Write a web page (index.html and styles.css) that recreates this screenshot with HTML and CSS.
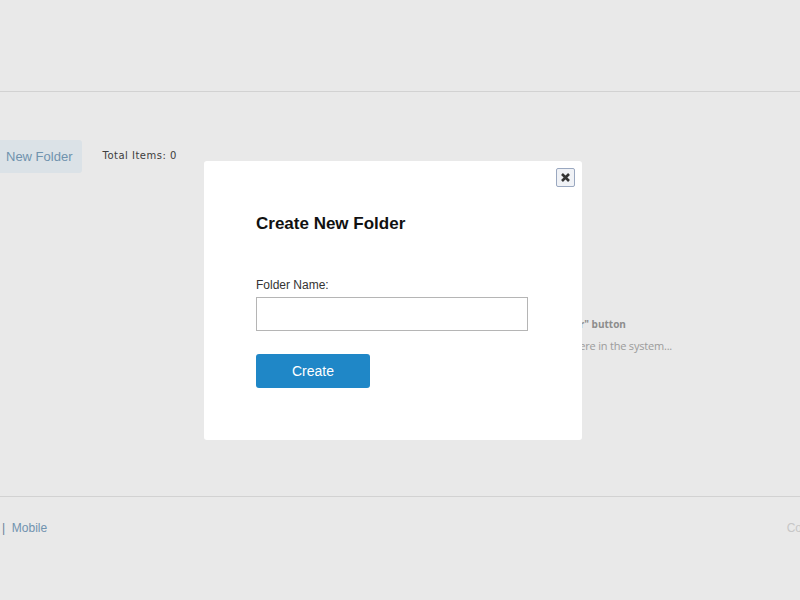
FILE: index.html
```html
<!DOCTYPE html>
<html>
<head>
    <title>Files</title>
    <link rel="stylesheet" href="styles.css">
</head>
<body>

    <!-- Header -->
    <div class="header"></div>

    <!-- Toolbar -->
    <div class="main">
        <div class="toolbar">
            <a class="new-btn" href="#">New Folder</a>
            <span class="total">Total Items: 0</span>
        </div>
        <div class="empty">
            <p class="empty-title">Click the "New Folder" button</p>
            <p class="empty-text">There are no items here in the system...</p>
        </div>
    </div>

    <!-- Footer -->
    <div class="footer">
        <span class="links">| &nbsp;<a href="#">Mobile</a></span>
        <span class="copy">Co</span>
    </div>

    <!-- Modal -->
    <div class="overlay"></div>
    <div class="modal">
        <button class="close" title="Close">
            <svg width="11" height="11" viewBox="0 0 11 11"><path d="M2 2 L9 9 M9 2 L2 9" stroke="#333" stroke-width="2.6"/></svg>
        </button>
        <h2>Create New Folder</h2>
        <label for="folder">Folder Name:</label>
        <input type="text" id="folder">
        <button class="create">Create</button>
    </div>

</body>
</html>
```

FILE: styles.css
```css
body {
    margin: 0;
    background: #fdfdfd;
    font-family: Arial, "Liberation Sans", sans-serif;
    width: 800px;
    height: 600px;
    overflow: hidden;
}
.header {
    height: 91px;
    border-bottom: 1px solid #e4e4e4;
}
.main {
    height: 404px;
    border-bottom: 1px solid #e4e4e4;
}
.toolbar {
    display: flex;
    align-items: center;
    padding-top: 48px;
}
.new-btn {
    display: inline-block;
    background: #eef6fb;
    color: #7aa0bd;
    font-size: 13px;
    text-decoration: none;
    padding: 9px 10px 8px 6px;
    line-height: 16px;
    border-radius: 0 3px 3px 0;
}
.total {
    margin-left: 20px;
    font-family: "DejaVu Sans", Verdana, sans-serif;
    font-size: 10px;
    letter-spacing: 0.5px;
    color: #444;
    margin-top: -3px;
}
.empty {
    margin-left: 477px;
    margin-top: 144px;
    font-family: "Open Sans", sans-serif;
    color: #aaa;
    font-size: 11px;
    line-height: 14px;
}
.empty p {
    margin: 0 0 8px;
}
.empty-title {
    font-size: 10px;
    font-weight: bold;
    color: #999;
}
.empty-text {
    letter-spacing: -0.2px;
}
.footer {
    display: flex;
    justify-content: space-between;
    padding: 24px 0 0 2px;
    font-size: 12px;
}
.links {
    color: #6f8fa8;
}
.links a {
    color: #7aa0bd;
    text-decoration: none;
}
.copy {
    color: #d8d8d8;
    margin-right: -2px;
}
.overlay {
    position: fixed;
    left: 0;
    top: 0;
    right: 0;
    bottom: 0;
    background: rgba(0, 0, 0, 0.08);
}
.modal {
    position: fixed;
    left: 204px;
    top: 161px;
    width: 378px;
    height: 279px;
    box-sizing: border-box;
    padding: 53px 52px 0;
    background: white;
    border-radius: 3px;
}
.close {
    position: absolute;
    left: 352px;
    top: 7px;
    width: 19px;
    height: 19px;
    padding: 0;
    border: 1px solid #9aa8c0;
    background: #f0f2f6;
    border-radius: 2px;
    display: flex;
    align-items: center;
    justify-content: center;
}
.modal h2 {
    margin: 0;
    font-size: 17px;
    color: #111;
    line-height: 20px;
}
.modal label {
    display: block;
    margin-top: 44px;
    font-size: 12px;
    color: #333;
    line-height: 14px;
}
.modal input {
    display: block;
    box-sizing: border-box;
    width: 272px;
    height: 34px;
    margin-top: 5px;
    border: 1px solid #b5b5b5;
}
.create {
    margin-top: 23px;
    width: 114px;
    height: 34px;
    background: #1f87c7;
    color: white;
    border: none;
    border-radius: 3px;
    font-family: Arial, "Liberation Sans", sans-serif;
    font-size: 14px;
}
```
